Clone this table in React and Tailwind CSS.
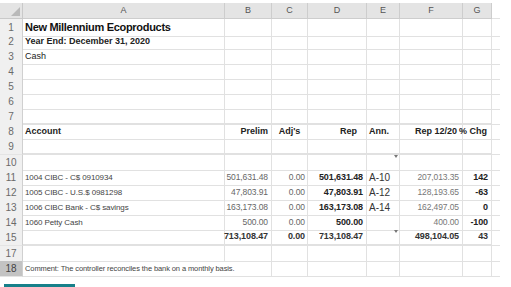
import React from 'react';

// Column widths: row header, A..G, plus a sliver of H
const GRID = 'grid grid-cols-[23px_202px_47px_36px_59px_33px_63px_29px_8px]';

const Cell = ({ children, className = '', right = true, noR = false }) => (
  <div
    className={`relative flex items-center whitespace-nowrap ${right ? 'justify-end pr-[3px]' : 'justify-start pl-[2px]'} ${noR ? '' : 'border-r border-[#e1e1e1]'} ${className}`}
  >
    {children}
  </div>
);

const Marker = () => (
  <span className="absolute right-[1px] top-0 w-0 h-0 border-l-[2px] border-r-[2px] border-t-[3px] border-l-transparent border-r-transparent border-t-[#777]" />
);

const Row = ({ n, h = 'h-[15px]', hdr = 'bg-[#f0f0f0] text-[#6a6a6a]', bottom = [], cells = [], noRA = false }) => {
  // bottom: classes for bottom border per column A..H, default thin gridline
  const b = (i) => bottom[i] || 'border-b border-[#e1e1e1]';
  const c = (i) => cells[i] || {};
  return (
    <div className={`${GRID} ${h}`}>
      <div className={`flex items-center justify-center border-r border-b border-[#d0d0d0] border-b-[#e4e4e4] text-[10px] ${hdr}`}>
        {n}
      </div>
      {[0, 1, 2, 3, 4, 5, 6, 7].map((i) => (
        <Cell
          key={i}
          right={c(i).left ? false : i !== 0}
          noR={(i === 0 && noRA) || i === 7}
          className={`${b(i)} ${c(i).cls || ''}`}
        >
          {c(i).marker && <Marker />}
          {c(i).t}
        </Cell>
      ))}
    </div>
  );
};

const thick = 'border-b-2 border-[#5c5c5c]';
const total = 'border-b-2 border-[#2e2e2e]';
const mid = 'border-b border-[#8a8a8a]';
const sevenThick = [thick, thick, thick, thick, thick, thick, thick];

const acct = 'text-[8px] text-[#444] tracking-[-0.1px]';
const num = 'text-[8.5px] text-[#666] tracking-[-0.1px]';
const bnum = 'text-[9px] font-bold text-[#222] tracking-[-0.1px]';
const fnum = 'text-[8.5px] text-[#777] tracking-[-0.1px]';
const ann = 'text-[10px] text-[#333] pl-[1px]';
const head = 'text-[9px] font-bold text-[#222]';

const dataRows = [
  { n: 11, a: '1004 CIBC - C$ 0910934', b: '501,631.48', d: '501,631.48', e: 'A-10', f: '207,013.35', g: '142' },
  { n: 12, a: '1005 CIBC - U.S.$ 0981298', b: '47,803.91', d: '47,803.91', e: 'A-12', f: '128,193.65', g: '-63' },
  { n: 13, a: '1006 CIBC Bank - C$ savings', b: '163,173.08', d: '163,173.08', e: 'A-14', f: '162,497.05', g: '0' },
  { n: 14, a: '1060 Petty Cash', b: '500.00', d: '500.00', e: '', f: '400.00', g: '-100' },
];

const Sheet = () => (
  <div className="w-[511px] h-[287px] overflow-hidden bg-white pt-[3px] font-['Liberation_Sans',Arial,sans-serif]">
    {/* column letters */}
    <div className={`${GRID} h-[16px]`}>
      <div className="relative bg-[#e4e4e4] border-r border-b border-[#c9c9c9]">
        <svg className="absolute right-[2px] bottom-[2px]" width="9" height="9" viewBox="0 0 9 9">
          <polygon points="9,0 9,9 0,9" fill="#b9b9b9" />
        </svg>
      </div>
      {['A', 'B', 'C', 'D', 'E', 'F', 'G'].map((l) => (
        <div key={l} className="flex items-center justify-center bg-[#e4e4e4] border-r border-b border-[#cdcdcd] text-[9px] text-[#555]">
          {l}
        </div>
      ))}
      <div className="border-b border-[#e1e1e1]" />
    </div>

    <Row n={1} cells={[{ t: 'New Millennium Ecoproducts', left: true, cls: 'text-[11px] font-bold text-[#111] tracking-[-0.3px]' }]} />
    <Row n={2} cells={[{ t: 'Year End: December 31, 2020', left: true, cls: 'text-[9px] font-bold text-[#222]' }]} />
    <Row n={3} cells={[{ t: 'Cash', left: true, cls: 'text-[9px] text-[#222]' }]} />
    <Row n={4} />
    <Row n={5} />
    <Row n={6} />
    <Row n={7} bottom={sevenThick} />
    <Row
      n={8}
      cells={[
        { t: 'Account', left: true, cls: head },
        { t: 'Prelim', cls: `${head} pr-[2px]` },
        { t: "Adj's", cls: `${head} !justify-center !pr-0` },
        { t: 'Rep', cls: `${head} !pr-[9px]` },
        { t: 'Ann.', left: true, cls: head },
        { t: 'Rep 12/20', cls: `${head} !pr-[5px]` },
        { t: '% Chg', cls: `${head} !pr-[4px]` },
      ]}
    />
    <Row n={9} h="h-[16px]" bottom={sevenThick} />
    <Row n={10} cells={[{}, {}, {}, {}, { marker: true }]} />
    {dataRows.map((r) => (
      <Row
        key={r.n}
        n={r.n}
        bottom={r.n === 14 ? [null, mid, mid, mid, mid, mid, mid] : []}
        cells={[
          { t: r.a, left: true, cls: acct },
          { t: r.b, cls: num },
          { t: '0.00', cls: `${num} !pr-[2px]` },
          { t: r.d, cls: bnum },
          { t: r.e, left: true, cls: ann },
          { t: r.f, cls: fnum },
          { t: r.g, cls: bnum },
        ]}
      />
    ))}
    <Row
      n={15}
      h="h-[16px]"
      bottom={[total, total, total, total, total, total, total]}
      cells={[
        {},
        { t: '713,108.47', cls: `${bnum} !text-[#333]` },
        { t: '0.00', cls: `${bnum} !text-[#333] !pr-[2px]` },
        { t: '713,108.47', cls: `${bnum} !text-[#333]` },
        { marker: true },
        { t: '498,104.05', cls: `${bnum} !text-[#333]` },
        { t: '43', cls: `${bnum} !text-[#333]` },
      ]}
    />
    <Row n={17} />
    <Row
      n={18}
      noRA
      hdr="bg-[#c3c3c3] text-[#444]"
      cells={[{ t: 'Comment: The controller reconciles the bank on a monthly basis.', left: true, cls: 'text-[7.5px] text-[#444] tracking-[-0.1px] z-10' }]}
    />

    <div className="mt-[8px] ml-[4px] w-[71px] h-[4px] bg-[#17808a]" />
  </div>
);

export default function App() {
  return <Sheet />;
}
